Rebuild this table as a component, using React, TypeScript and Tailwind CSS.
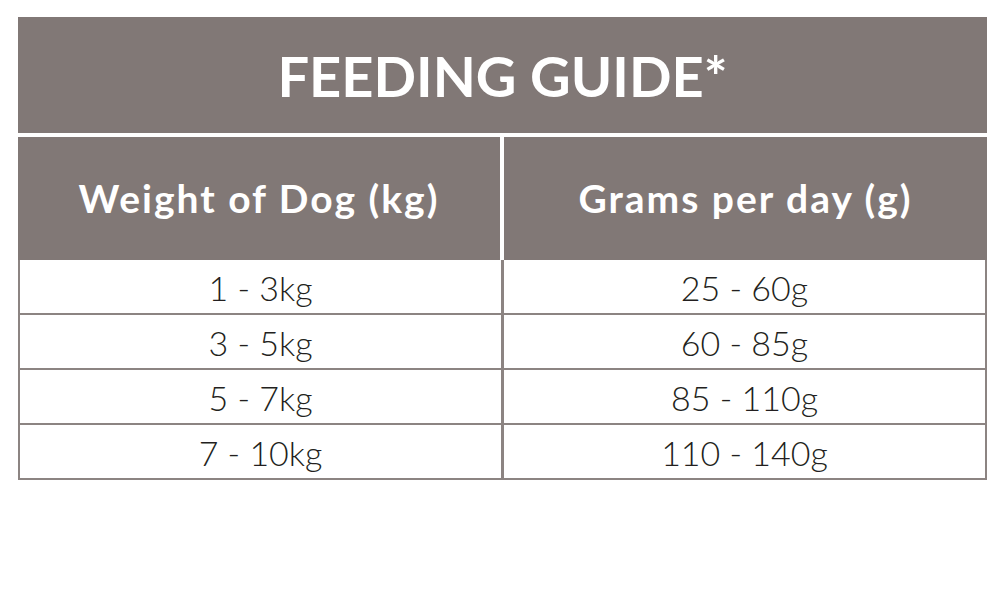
import React from "react";

const rows = [
  ["1 - 3kg", "25 - 60g"],
  ["3 - 5kg", "60 - 85g"],
  ["5 - 7kg", "85 - 110g"],
  ["7 - 10kg", "110 - 140g"],
];

export default function App() {
  return (
    <div
      className="w-[1004px] h-[608px] bg-white pt-[17px] pl-[18px]"
      style={{ fontFamily: "Lato, 'Open Sans', sans-serif" }}
    >
      <div className="w-[969px]">
        <div className="h-[116px] bg-[#817876] flex items-center justify-center">
          <span className="text-white text-[56px] font-bold leading-none pt-[2px]">
            FEEDING GUIDE*
          </span>
        </div>
        <div className="mt-[4px] grid grid-cols-[482px_483px] gap-x-[4px]">
          <div className="h-[123px] bg-[#817876] flex items-center justify-center">
            <span className="text-white text-[39px] font-bold leading-none tracking-[2px]">Weight of Dog (kg)</span>
          </div>
          <div className="h-[123px] bg-[#817876] flex items-center justify-center">
            <span className="text-white text-[39px] font-bold leading-none tracking-[2px]">Grams per day (g)</span>
          </div>
        </div>
        <div className="border-x-2 border-[#8c8482]">
          {rows.map(([a, b]) => (
            <div key={a} className="grid grid-cols-[484px_481px] border-b-2 border-[#8c8482] h-[55px]">
              <div className="border-r-[3px] border-[#8c8482] flex items-center justify-center text-[#231f20] text-[34px] font-light leading-none pt-[2px]">
                {a}
              </div>
              <div className="flex items-center justify-center text-[#231f20] text-[34px] font-light leading-none pt-[2px]">
                {b}
              </div>
            </div>
          ))}
        </div>
      </div>
    </div>
  );
}
